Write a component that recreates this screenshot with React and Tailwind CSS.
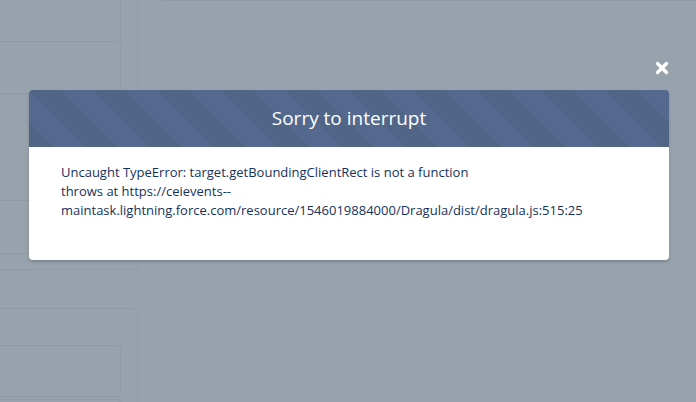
import React from "react";

export default function App() {
  return (
    <div
      className="relative w-[696px] h-[402px] overflow-hidden bg-[#97a2ad]"
      style={{ fontFamily: '"Open Sans", "Liberation Sans", sans-serif' }}
    >
      {/* faint page behind the backdrop */}
      <div className="flex h-full">
        <div className="flex flex-col w-[138px] shrink-0 gap-[38px]">
          <div className="shrink-0 ml-[-20px] mt-[-10px] w-[158px] h-[280px] border border-[#8f9aa6] rounded-[4px] pr-[16px] flex flex-col items-start">
            <div className="shrink-0 ml-[-1px] w-[141px] h-[51px] border-b border-r border-[#8f9aa6] rounded-br-[4px]" />
            <div className="shrink-0 ml-[-1px] w-[141px] h-[52px] border-b border-r border-[#8f9aa6] rounded-r-[4px]" />
            <div className="shrink-0 ml-[-1px] w-[141px] h-[107px] border-b border-r border-[#8f9aa6] rounded-r-[4px]" />
            <div className="shrink-0 ml-[-1px] w-[141px] h-[53px] border-b border-r border-[#8f9aa6] rounded-r-[4px]" />
          </div>
          <div className="shrink-0 ml-[-20px] w-[158px] h-[200px] border border-[#8f9aa6] rounded-[4px] pt-[36px] flex flex-col gap-[2px]">
            <div className="shrink-0 ml-[-1px] w-[141px] h-[52px] border border-l-0 border-[#8f9aa6] rounded-r-[4px]" />
            <div className="shrink-0 ml-[-1px] w-[141px] h-[52px] border border-l-0 border-[#8f9aa6] rounded-r-[4px]" />
          </div>
        </div>
        <div className="flex-1 flex flex-col">
          <div className="ml-[25px] border-t border-[#8f9aa6] h-0" />
        </div>
      </div>

      {/* modal overlay */}
      <div className="absolute inset-0 flex flex-col items-center pt-[60px] pl-[2px]">
        <div className="w-[640px] flex justify-end">
          <svg width="14" height="14" viewBox="0 0 14 14" className="mb-[16px] mt-[1px]">
            <path
              d="M2.5 2.5 L11.5 11.5 M11.5 2.5 L2.5 11.5"
              stroke="#ffffff"
              strokeWidth="3.4"
              strokeLinecap="round"
            />
          </svg>
        </div>
        <div className="w-[640px] -mt-[1px] rounded-[4px] shadow-[0_2px_3px_rgba(0,0,0,0.18)] overflow-hidden">
          <div className="h-[57px] flex items-center justify-center bg-[#54698d] bg-[linear-gradient(45deg,rgba(0,0,0,0.04)_25%,transparent_25%,transparent_50%,rgba(0,0,0,0.04)_50%,rgba(0,0,0,0.04)_75%,transparent_75%,transparent)] bg-[length:64px_64px]">
            <h2 className="text-white text-[19px] leading-[25px] font-normal">
              Sorry to interrupt
            </h2>
          </div>
          <div className="bg-white h-[113px] px-[32px] pt-[16px] text-[13px] leading-[19px] text-[#16325c]">
            <div>Uncaught TypeError: target.getBoundingClientRect is not a function</div>
            <div>throws at https://ceievents--</div>
            <div>maintask.lightning.force.com/resource/1546019884000/Dragula/dist/dragula.js:515:25</div>
          </div>
        </div>
      </div>
    </div>
  );
}
